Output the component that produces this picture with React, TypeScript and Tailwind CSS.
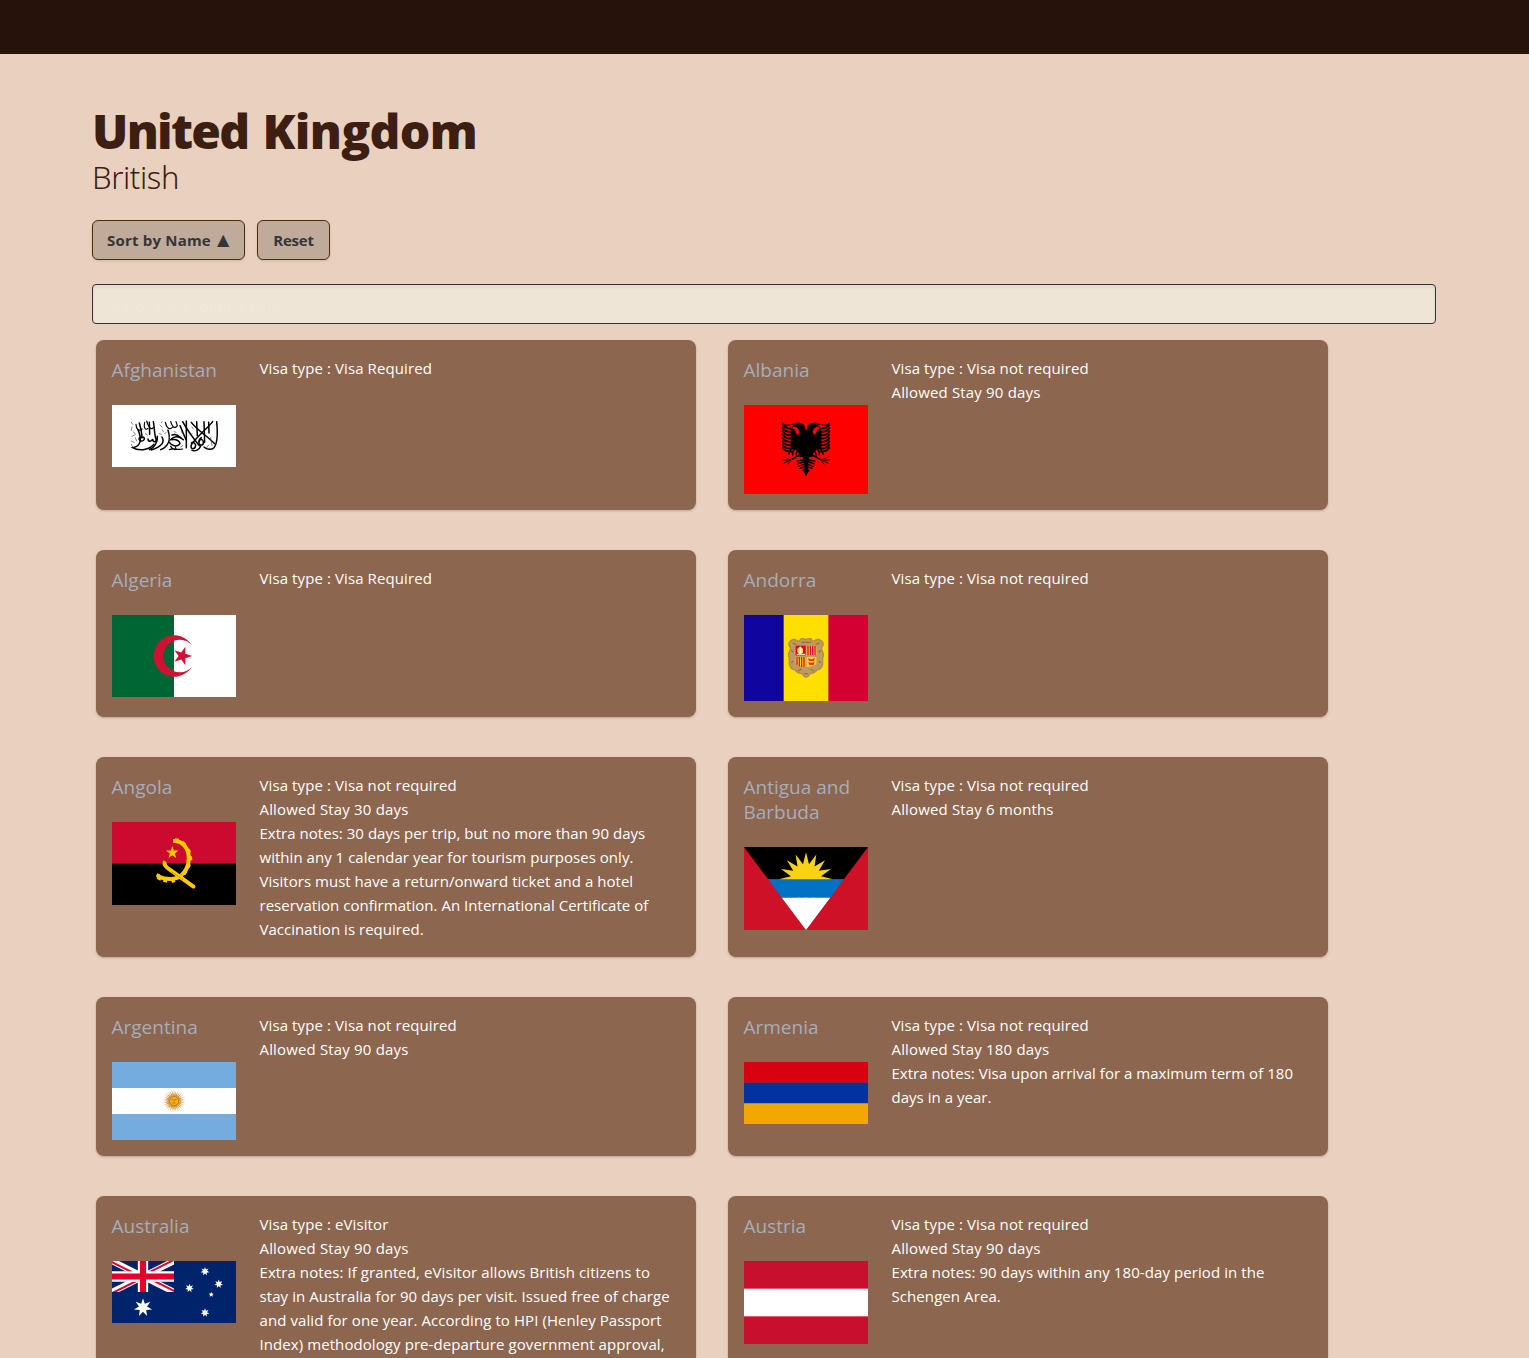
import React from 'react';

/** Points of a regular star polygon centred on (cx, cy). */
function star(cx: number, cy: number, outer: number, inner: number, n: number, turn = -90): string {
  const pts: string[] = [];
  for (let i = 0; i < n * 2; i++) {
    const r = i % 2 === 0 ? outer : inner;
    const a = ((turn + (i * 180) / n) * Math.PI) / 180;
    pts.push(`${(cx + r * Math.cos(a)).toFixed(2)},${(cy + r * Math.sin(a)).toFixed(2)}`);
  }
  return pts.join(' ');
}

function Afghanistan() {
  return (
    <svg viewBox="0 0 372 186" className="block h-[62px] w-full">
      <rect width="372" height="186" fill="#fff" />
      <g fill="none" stroke="#000" strokeLinecap="round">
        <g strokeWidth="4.5">
          <path d="M314 50C317 80 319 112 306 128C298 136 284 134 276 126" />
          <path d="M302 50C290 66 262 88 240 116C232 130 244 136 250 126C254 118 244 108 238 114" />
          <path d="M238 52C252 72 286 94 308 116" />
          <path d="M212 50C226 76 244 100 262 122" />
          <path d="M223 48L223 128M254 50L256 92M276 50L278 112M290 52L291 84" />
          <path d="M204 62C212 80 216 92 222 104" />
          <path d="M268 98C256 108 260 122 270 120C278 116 274 102 266 104M240 136C250 140 262 134 266 124" />
          <path d="M214 104C200 90 184 94 176 104C190 102 202 106 204 116C196 128 178 122 172 112" />
          <path d="M168 76C176 100 172 124 146 134M180 90C190 86 198 90 206 98" />
          <path d="M150 96C158 110 152 124 118 135M112 134C128 128 136 116 136 94" />
          <path d="M136 100C132 114 122 112 122 102C118 112 108 110 108 102M90 98C82 92 78 104 86 108C96 110 100 100 94 96" />
          <path d="M78 74C90 102 88 124 62 128C78 138 108 138 126 118" />
          <path d="M82 54C88 76 90 88 90 98M112 52L113 88M124 50C128 66 126 92 134 108" />
        </g>
        <g strokeWidth="3.5">
          <path d="M72 58C72 74 82 80 90 72M98 52C94 68 100 78 108 70M104 48C108 62 116 78 124 68" />
          <path d="M160 52C164 70 174 76 182 66M176 50C180 64 188 74 196 62L192 50" />
          <path d="M172 134C184 128 196 136 212 132M176 124C186 140 196 134 190 126" />
        </g>
        <path
          strokeWidth="2"
          stroke="#444"
          d="M58 52L62 58M60 66L58 76M64 80L70 88M60 94L68 90M58 108L66 112M70 98L74 108M58 118L62 126M100 86L106 90M142 86L148 88M144 60L150 66M150 74L154 80M158 86L162 82M186 80L192 82M240 66L244 72M284 128L290 120M296 98L300 122M236 90L240 86M208 80L212 86M150 50L148 54M160 122L164 126M206 126L212 122"
        />
      </g>
    </svg>
  );
}

function EagleHalf() {
  const feathers = [66, 76, 86, 96, 106, 116, 126, 135];
  return (
    <>
      <path d="M-1 82C0 66 6 54 20 53C30 51 38 54 47 60L36 60L44 65C34 64 30 66 25 70C19 76 19 82 23 88C27 92 31 88 30 82C32 76 38 70 46 70L46 132L30 134L18 150L20 156L8 156L-1 170Z" fill="#000" />
      <path d="M28 57L37 57" stroke="#f00" strokeWidth="2" />
      <g fill="none" stroke="#000" strokeWidth="5.5" strokeLinecap="round">
        {feathers.map((y) => (
          <path key={y} d={`M42 ${y + 4}C54 ${y + 7} 66 ${y + 1} 70 ${y - 7}`} />
        ))}
        <path d="M50 60C60 64 66 60 70 55" strokeWidth="5" />
        <path d="M24 132C26 142 32 146 30 152M34 130C36 138 42 142 40 149M43 130C45 136 52 138 51 147" strokeWidth="4.5" />
        <path d="M6 150C14 146 28 154 40 162M20 150L34 158" strokeWidth="5" />
        <path d="M34 160C46 160 52 170 72 164M46 165L66 156M48 166L66 174M44 165L54 177" strokeWidth="2.5" />
        <path d="M4 164L26 168M5 170L25 176M5 178L22 184M5 186L18 190" strokeWidth="4.5" />
      </g>
      <path d="M-1 150L10 158L4 188L11 197C5 200 4 207 -1 214Z" fill="#000" />
    </>
  );
}

function Albania() {
  return (
    <svg viewBox="0 0 372 267" className="block h-[89px] w-full">
      <rect width="372" height="267" fill="#f00" />
      <g transform="translate(186 0)">
        <EagleHalf />
      </g>
      <g transform="translate(186 0) scale(-1 1)">
        <EagleHalf />
      </g>
      <path d="M180 58L186 78L192 58L186 50Z" fill="#f00" />
    </svg>
  );
}

function Algeria() {
  return (
    <svg viewBox="0 0 372 246" className="block h-[82px] w-full">
      <rect width="372" height="246" fill="#fff" />
      <rect width="186" height="246" fill="#063" />
      <path d="M240 91A62 62 0 1 0 240 155A49 49 0 1 1 240 91Z" fill="#d21034" />
      <polygon points={star(211, 123, 29.5, 11.2, 5, 0)} fill="#d21034" />
    </svg>
  );
}

function Andorra() {
  return (
    <svg viewBox="0 0 372 258" className="block h-[86px] w-full">
      <rect width="372" height="258" fill="#ffdf00" />
      <rect width="119" height="258" fill="#10069f" />
      <rect x="253" width="119" height="258" fill="#d50032" />
      <path
        d="M146 74C152 68 160 82 168 78C168 66 182 72 186 74C190 72 204 66 204 78C212 82 220 68 226 74C236 78 242 86 234 96C228 104 242 112 238 124C232 132 240 144 234 154C230 166 222 160 216 168C206 180 196 170 194 182C190 188 182 188 178 182C176 170 166 180 156 168C150 160 142 166 138 154C132 144 140 132 134 124C130 112 144 104 138 96C130 86 136 78 146 74Z"
        fill="#bf9a60"
        stroke="#b08c50"
        strokeWidth="4"
      />
      <path d="M146 84L156 88M226 84L216 88M142 106L148 112M230 106L224 112M142 144L148 138M230 144L224 138M162 168L172 162M210 168L200 162M180 176L192 176M172 82L200 82" stroke="#94733c" strokeWidth="4" />
      <rect x="155" y="92" width="30" height="29" fill="#d50032" />
      <path d="M169 94L177 101V112L172 117H164L160 110V101Z" fill="#ffe04a" />
      <path d="M169 96V115M158 118H184" stroke="#fff" strokeWidth="3" />
      <path d="M188 92H217V121H188Z" fill="#f4c51d" />
      <path d="M192 92V121M199 92V121M206 92V121M213 92V121" stroke="#d50032" strokeWidth="3.5" />
      <path d="M155 126H185V155C170 156 155 152 155 142Z" fill="#f4c51d" />
      <path d="M159 126V149M166 126V154M173 126V155M180 126V155" stroke="#d50032" strokeWidth="3.5" />
      <path d="M188 126H217V142C217 152 202 156 188 155Z" fill="#ffd51d" />
      <path d="M193 130L197 133H207L212 129L210 137H195ZM194 141L197 144H207L211 140L209 149H196Z" fill="#d52b1e" stroke="#d52b1e" />
    </svg>
  );
}

function Angola() {
  return (
    <svg viewBox="0 0 372 249" className="block h-[83px] w-full">
      <rect width="372" height="249" fill="#000" />
      <rect width="372" height="124.500" fill="#cc092f" />
      <path d="M183 57C214 55 232 82 230 112C229 146 206 171 176 171C160 171 146 168 136 160" fill="none" stroke="#ffcb00" strokeWidth="12" />
      <path
        d="M187 60L189 49L201 50L199 63ZM207 66L214 57L223 65L217 74ZM222 84L233 80L237 90L228 95ZM230 103L240 103L241 115L231 115ZM226 124L237 128L233 138L223 134ZM216 143L226 150L220 159L210 152ZM187 168L190 180L180 183L177 171ZM166 170L165 182L153 179L156 168ZM149 165L145 176L134 170L140 160ZM136 154L144 158L139 167L132 162Z"
        fill="#ffcb00"
      />
      <path d="M155 115L164 121C162 128 168 132 178 139L248 189C254 195 248 203 240 198L164 143C150 132 149 122 155 115Z" fill="#ffcb00" />
      <path d="M180 151L214 173M198 151L224 168" stroke="#201a00" strokeWidth="1.500" strokeDasharray="3 3" />
      <polygon points={star(181, 92, 20, 7.8, 5)} fill="#ffcb00" />
    </svg>
  );
}

function AntiguaAndBarbuda() {
  return (
    <svg viewBox="0 0 372 249" className="block h-[83px] w-full">
      <rect width="372" height="249" fill="#ce1126" />
      <path d="M0 0H372L299.500 97H72.500Z" fill="#000" />
      <polygon points={star(186, 97, 81, 46, 16)} fill="#fcd116" />
      <path d="M72.500 97H299.500L258.500 152H113.500Z" fill="#0072c6" />
      <path d="M113.500 152H258.500L186 249Z" fill="#fff" />
    </svg>
  );
}

function Argentina() {
  return (
    <svg viewBox="0 0 372 234" className="block h-[78px] w-full">
      <rect width="372" height="234" fill="#74acdf" />
      <rect y="78" width="372" height="78" fill="#fff" />
      <polygon points={star(186, 117, 35, 18, 32)} fill="#d9a869" />
      <polygon points={star(186, 117, 26, 13, 16)} fill="#cf9340" />
      <circle cx="186" cy="117" r="13.500" fill="#f6b40e" stroke="#b56f1d" strokeWidth="2" />
      <path d="M178 113H184M188 113H194M186 113V119M181 123H191" stroke="#a35a10" strokeWidth="2" />
    </svg>
  );
}

function Armenia() {
  return (
    <svg viewBox="0 0 372 186" className="block h-[62px] w-full">
      <rect width="372" height="62" fill="#d90012" />
      <rect y="62" width="372" height="62" fill="#0033a0" />
      <rect y="124" width="372" height="62" fill="#f2a800" />
    </svg>
  );
}

function Australia() {
  return (
    <svg viewBox="0 0 372 186" className="block h-[62px] w-full">
      <defs>
        <clipPath id="canton">
          <rect width="186" height="93" />
        </clipPath>
        <clipPath id="saltire">
          <path d="M93 46.500H186V93ZM93 46.500V93H0ZM93 46.500H0V0ZM93 46.500V0H186Z" />
        </clipPath>
      </defs>
      <rect width="372" height="186" fill="#00236b" />
      <g clipPath="url(#canton)">
        <path d="M0 0L186 93M186 0L0 93" stroke="#fff" strokeWidth="18.600" />
        <path d="M0 0L186 93M186 0L0 93" stroke="#e4002b" strokeWidth="12.400" clipPath="url(#saltire)" />
        <path d="M93 0V93M0 46.500H186" stroke="#fff" strokeWidth="31" />
        <path d="M93 0V93M0 46.500H186" stroke="#e4002b" strokeWidth="18.600" />
      </g>
      <g fill="#fff">
        <polygon points={star(93, 139.5, 28, 12.4, 7)} />
        <polygon points={star(279, 155, 13.3, 6.4, 7)} />
        <polygon points={star(232.5, 81.400, 13.3, 6.4, 7)} />
        <polygon points={star(279, 31, 13.3, 6.4, 7)} />
        <polygon points={star(320.300, 68.900, 13.3, 6.4, 7)} />
        <polygon points={star(297.600, 100.700, 7.8, 3.8, 5)} />
      </g>
    </svg>
  );
}

function Austria() {
  return (
    <svg viewBox="0 0 372 249" className="block h-[83px] w-full">
      <rect width="372" height="249" fill="#c8102e" />
      <rect y="83" width="372" height="83" fill="#fff" />
    </svg>
  );
}

interface Country {
  name: string;
  Flag: () => React.JSX.Element;
  visa: string;
  stay?: string;
  notes?: string[];
  notesClass?: string;
}

const countries: Country[] = [
  { name: 'Afghanistan', Flag: Afghanistan, visa: 'Visa Required' },
  { name: 'Albania', Flag: Albania, visa: 'Visa not required', stay: '90 days' },
  { name: 'Algeria', Flag: Algeria, visa: 'Visa Required' },
  { name: 'Andorra', Flag: Andorra, visa: 'Visa not required' },
  {
    name: 'Angola',
    Flag: Angola,
    visa: 'Visa not required',
    stay: '30 days',
    notes: [
      '30 days per trip, but no more than 90 days',
      'within any 1 calendar year for tourism purposes only.',
      'Visitors must have a return/onward ticket and a hotel',
      'reservation confirmation. An International Certificate of',
      'Vaccination is required.',
    ],
  },
  { name: 'Antigua and Barbuda', Flag: AntiguaAndBarbuda, visa: 'Visa not required', stay: '6 months' },
  { name: 'Argentina', Flag: Argentina, visa: 'Visa not required', stay: '90 days' },
  {
    name: 'Armenia',
    Flag: Armenia,
    visa: 'Visa not required',
    stay: '180 days',
    notes: ['Visa upon arrival for a maximum term of 180', 'days in a year.'],
  },
  {
    name: 'Australia',
    Flag: Australia,
    visa: 'eVisitor',
    stay: '90 days',
    notesClass: 'tracking-[0.08px]',
    notes: [
      'If granted, eVisitor allows British citizens to',
      'stay in Australia for 90 days per visit. Issued free of charge',
      'and valid for one year. According to HPI (Henley Passport',
      'Index) methodology pre-departure government approval,',
    ],
  },
  {
    name: 'Austria',
    Flag: Austria,
    visa: 'Visa not required',
    stay: '90 days',
    notesClass: 'tracking-[0.08px]',
    notes: ['90 days within any 180-day period in the', 'Schengen Area.'],
  },
];

function CountryCard({ name, Flag, visa, stay, notes, notesClass = 'tracking-[0.03px]' }: Country) {
  return (
    <article className="flex gap-[23.5px] rounded-lg bg-[#8c664e] p-4 shadow-[0_1px_3px_rgba(0,0,0,0.12),0_1px_2px_rgba(0,0,0,0.1)]">
      <div className="w-[124px] shrink-0">
        <h3 className="mb-[22px] -ml-[0.5px] pt-[2px] text-[19px] leading-[25px] text-[#a6adbb]">{name}</h3>
        <Flag />
      </div>
      <div className="text-[15px] leading-6 whitespace-nowrap text-white">
        <p className="tracking-[0.1px]">Visa type : {visa}</p>
        {stay && <p className="tracking-[0.16px]">Allowed Stay {stay}</p>}
        {notes && (
          <p className={notesClass}>
            {notes.map((line, i) => (
              <span key={line} className="block">
                {i === 0 ? `Extra notes: ${line}` : line}
              </span>
            ))}
          </p>
        )}
      </div>
    </article>
  );
}

export default function App() {
  return (
    <div className="h-[1358px] overflow-hidden bg-[#ead1bf] font-['Open_Sans','Noto_Sans',sans-serif]">
      <header className="h-[54px] bg-[#26120b]" />
      <main className="pt-[53px] pr-[93px] pl-[92px]">
        <h1 className="text-5xl leading-[48px] font-black text-[#3c1e12]">
          <span className="tracking-[-1.7px]">United</span>
          <span className="tracking-[1.6px]"> </span>
          <span className="tracking-[-0.7px]">Kingdom</span>
        </h1>
        <p className="mt-[6px] font-['Noto_Sans'] text-[31px] leading-8 font-light tracking-[-0.4px] text-[#3c1e12]">
          British
        </p>

        <div className="mt-[27px] flex gap-3 text-[15px] font-bold text-[#333639]">
          <button className="flex h-10 w-[153px] items-center gap-[6px] rounded-md border border-[#49300d] bg-[#c0ab9b] pl-[14px] tracking-[0.2px] shadow-sm">
            Sort by Name
            <span className="font-['DejaVu_Sans'] text-[16px] leading-4 tracking-normal">▲</span>
          </button>
          <button className="h-10 w-[73px] rounded-md border border-[#49300d] bg-[#c0ab9b] tracking-[-0.2px] shadow-sm">
            Reset
          </button>
        </div>

        <input
          type="text"
          placeholder="Search your country here"
          className="mt-6 block h-10 w-full rounded border border-[#333639] bg-[#efe5d6] px-3 pt-[3px] text-[15px] shadow-[inset_0_2px_4px_rgba(0,0,0,0.06)] outline-none placeholder:text-[#f0e8db]"
        />

        <section className="mt-4 ml-1 grid w-[1232px] grid-cols-2 gap-x-8 gap-y-10">
          {countries.map((country) => (
            <CountryCard key={country.name} {...country} />
          ))}
        </section>
      </main>
    </div>
  );
}
